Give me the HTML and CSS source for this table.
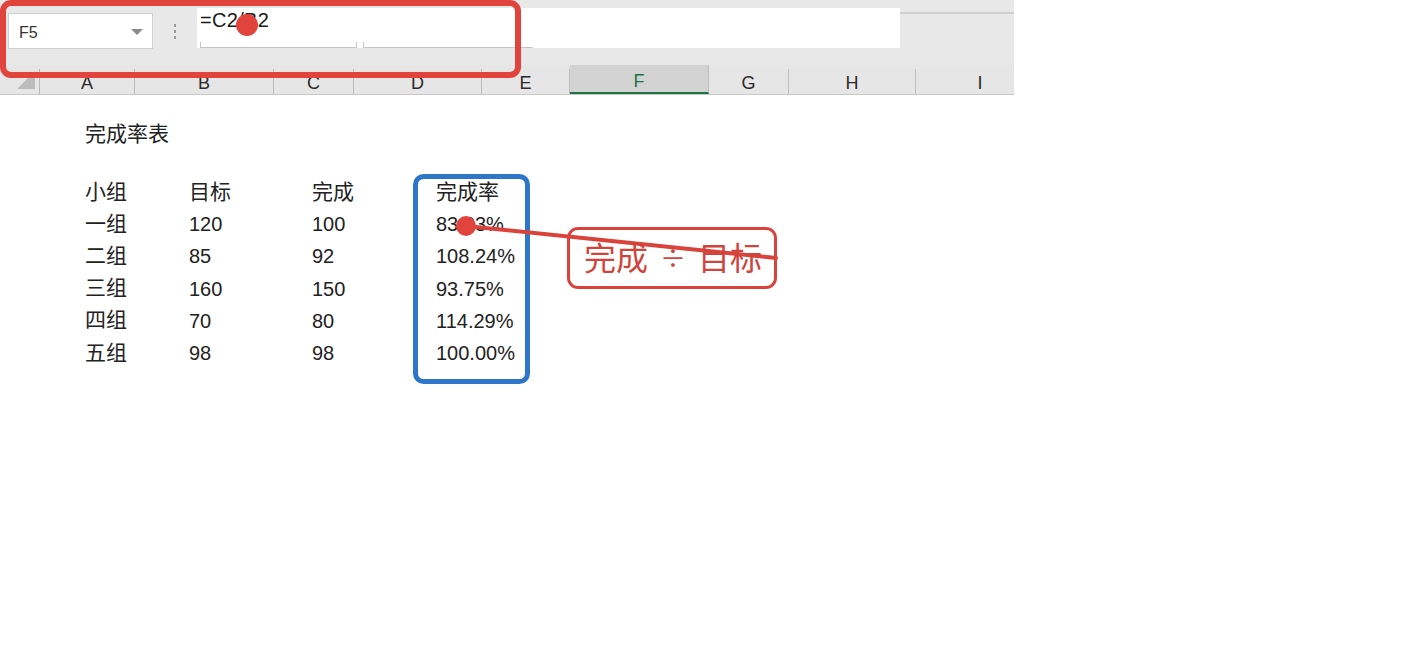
FILE: index.html
```html
<!DOCTYPE html>
<html lang="zh">
<head>
<meta charset="utf-8">
<title>完成率表</title>
<link rel="stylesheet" href="styles.css">
</head>
<body>
<div class="page">
  <div class="sheet">
    <div class="toolbar">
      <div class="namebox">
        <span class="cellref">F5</span>
        <span class="caret"></span>
      </div>
      <div class="grip"><i></i><i></i><i></i></div>
      <div class="formula">
        <span class="ftext">=C2/B2</span>
        <div class="fticks"><span class="seg seg1"></span><span class="seg seg2"></span></div>
      </div>
      <div class="tb-rest"></div>
    </div>
    <div class="colheads">
      <div class="corner"><span class="tri"></span></div>
      <div class="ch ch-a">A</div>
      <div class="ch ch-b">B</div>
      <div class="ch ch-c">C</div>
      <div class="ch ch-d">D</div>
      <div class="ch ch-e">E</div>
      <div class="ch ch-f active">F</div>
      <div class="ch ch-g">G</div>
      <div class="ch ch-h">H</div>
      <div class="ch ch-i">I</div>
    </div>
    <div class="cells">
      <div class="title">完成率表</div>
      <div class="table">
        <div class="zh">小组</div><div class="zh">目标</div><div class="zh">完成</div><div class="zh">完成率</div>
        <div class="zh">一组</div><div>120</div><div>100</div><div>83.33%</div>
        <div class="zh">二组</div><div>85</div><div>92</div><div>108.24%</div>
        <div class="zh">三组</div><div>160</div><div>150</div><div>93.75%</div>
        <div class="zh">四组</div><div>70</div><div>80</div><div>114.29%</div>
        <div class="zh">五组</div><div>98</div><div>98</div><div>100.00%</div>
      </div>
    </div>
  </div>
  <div class="blank"></div>

  <svg class="overlay" width="1420" height="661" viewBox="0 0 1420 661" aria-hidden="true">
    <rect x="3" y="3" width="515" height="72" rx="8" fill="none" stroke="#e0443c" stroke-width="6"/>
    <circle cx="247" cy="25" r="11" fill="#e0443c"/>
    <rect x="415.5" y="176.5" width="112" height="205" rx="8" fill="none" stroke="#2e77c8" stroke-width="5"/>
    <line x1="466" y1="226" x2="776" y2="258" stroke="#d9433b" stroke-width="4" stroke-linecap="round"/>
    <circle cx="466" cy="226" r="10" fill="#e0443c"/>
  </svg>
  <div class="note"><span>完成</span><span class="div">÷</span><span>目标</span></div>
</div>
</body>
</html>
```

FILE: styles.css
```css
* { box-sizing: border-box; }
html, body { margin: 0; padding: 0; background: #fff; }
body { font-family: "Liberation Sans", "Noto Sans CJK SC", sans-serif; color: #222; }

.page { position: relative; width: 1420px; height: 661px; display: flex; overflow: hidden; }
.sheet { width: 1014px; flex: none; display: flex; flex-direction: column; overflow: hidden; }
.blank { flex: 1; background: #fff; }

.toolbar {
  height: 65px; background: #e8e8e8; display: flex; align-items: flex-start;
  padding-top: 8px;
}
.namebox {
  margin: 5px 0 0 8px; width: 145px; height: 36px; background: #fff;
  border: 1px solid #cfcfcf; display: flex; align-items: center; justify-content: space-between;
  padding: 3px 9px 0 10px;
}
.cellref { font-size: 16px; color: #333; }
.caret { width: 0; height: 0; border-left: 6px solid transparent; border-right: 6px solid transparent; border-top: 6px solid #8a8a8a; margin-top: -2px; }
.grip { width: 44px; height: 40px; display: flex; flex-direction: column; align-items: center; justify-content: center; gap: 3px; padding-top: 6px; }
.grip i { display: block; width: 2px; height: 3px; background: #9a9a9a; }
.formula { width: 703px; height: 40px; background: #fff; position: relative; padding: 1px 0 0 3px; }
.ftext { font-size: 20px; color: #1a1a1a; letter-spacing: 0.3px; }
.fticks { position: absolute; left: 3px; bottom: 0; display: flex; gap: 6px; }
.seg { display: block; height: 6px; border: 1px solid #c4c4c4; border-top: 0; }
.seg1 { width: 157px; }
.seg2 { width: 170px; border-right: 0; }
.tb-rest { flex: 1; height: 40px; border-top: 2px solid #cfcfcf; margin-top: 4px; }

.colheads {
  height: 30px; background: #e6e6e6; display: flex; border-bottom: 1px solid #c8c8c8;
}
.corner { width: 40px; flex: none; position: relative; border-right: 1px solid #b9b9b9; margin-top: 4px; }
.tri {
  position: absolute; right: 4px; bottom: 5px; width: 0; height: 0;
  border-left: 18px solid transparent; border-bottom: 18px solid #bcbcbc;
}
.ch {
  flex: none; display: flex; align-items: flex-end; justify-content: center; padding-bottom: 0;
  font-size: 18px; color: #2a2a2a; border-right: 1px solid #bdbdbd; margin-top: 4px;
}
.ch-a { width: 95px; }
.ch-b { width: 139px; }
.ch-c { width: 80px; }
.ch-d { width: 128px; }
.ch-e { width: 88px; }
.ch-f { width: 139px; }
.ch-g { width: 80px; }
.ch-h { width: 127px; }
.ch-i { width: 128px; border-right: 0; }
.ch.active { background: #d3d3d3; color: #217346; border-bottom: 2px solid #217346; margin-top: 0; padding-top: 4px; padding-bottom: 0; }

.cells { flex: 1; background: #fff; padding: 21px 0 0 85px; }
.title { font-size: 21px; line-height: 32px; font-family: "Noto Sans CJK SC", sans-serif; }
.table {
  margin-top: 28px; display: grid; grid-template-columns: 104px 123px 124px auto;
  grid-auto-rows: 32.2px; font-size: 20px; align-items: center;
}
.table div { line-height: 32px; white-space: nowrap; }
.table .zh { font-size: 21px; font-family: "Noto Sans CJK SC", sans-serif; padding-bottom: 5px; }

.overlay { position: absolute; left: 0; top: 0; pointer-events: none; }
.note {
  position: absolute; left: 567px; top: 227px; width: 210px; height: 62px;
  border: 3px solid #d9433b; border-radius: 11px; display: flex; align-items: center;
  justify-content: center; gap: 12px; font-size: 32px; color: #d0443c;
  font-family: "Noto Sans CJK SC", sans-serif; padding: 0 0 4px 2px;
}
.note .div { font-size: 26px; }
```
